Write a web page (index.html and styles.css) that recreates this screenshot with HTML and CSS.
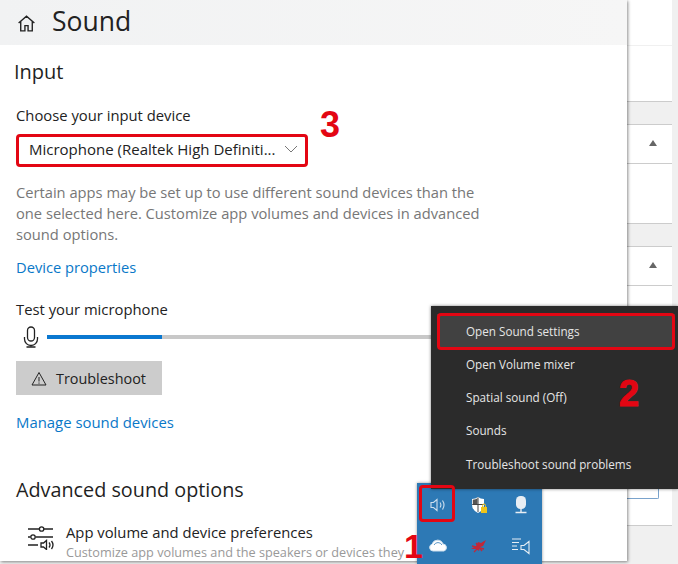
FILE: index.html
```html
<!DOCTYPE html>
<html lang="en">
<head>
<meta charset="utf-8">
<title>Sound</title>
<link rel="stylesheet" href="styles.css">
</head>
<body>
<div class="stage">
  <main class="settings">
    <header class="head">
      <svg class="home" width="21" height="21" viewBox="0 0 20 20"><path d="M2.500 9.500 10 3l7.500 6.500M4.500 8v9h4v-5h3v5h4V8" fill="none" stroke="#222" stroke-width="1.300"/></svg>
      <h1>Sound</h1>
    </header>
    <section class="body">
      <h2>Input</h2>
      <div class="label">Choose your input device</div>
      <div class="select"><span>Microphone (Realtek High Definiti...</span><svg width="14" height="8" viewBox="0 0 14 8"><path d="M1 1l6 6 6-6" fill="none" stroke="#777" stroke-width="1"/></svg></div>
      <p class="desc">Certain apps may be set up to use different sound devices than the one selected here. Customize app volumes and devices in advanced sound options.</p>
      <a class="link props">Device properties</a>
      <div class="label test">Test your microphone</div>
      <div class="meter">
        <svg width="16" height="22" viewBox="0 0 16 22"><rect x="4.500" y="1" width="7" height="14" rx="3.500" fill="none" stroke="#222" stroke-width="1.300"/><path d="M1.500 11v2a6.500 6.500 0 0 0 13 0v-2M8 19.500v1.500M3.500 21h9" fill="none" stroke="#222" stroke-width="1.300"/></svg>
        <div class="track"><div class="fill"></div></div>
      </div>
      <div class="btn"><svg width="16" height="15" viewBox="0 0 16 15"><path d="M8 1.500 15 14H1zM8 6v4.500M8 11.500v1.200" fill="none" stroke="#222" stroke-width="1"/></svg><span>Troubleshoot</span></div>
      <a class="link manage">Manage sound devices</a>
      <h2 class="adv">Advanced sound options</h2>
      <div class="pref">
        <svg class="pref-icon" width="28" height="26" viewBox="0 0 28 26"><path d="M1 5h11.500M17 5h9M1 13h2.500M8.500 13h17.500M1 21h10" fill="none" stroke="#222" stroke-width="1.500"/><circle cx="14.600" cy="5" r="2.200" fill="none" stroke="#222" stroke-width="1.300"/><circle cx="6" cy="13" r="2.200" fill="none" stroke="#222" stroke-width="1.300"/><path d="M14 19h2.500l3-2.500v9l-3-2.500H14zM22 18.500q2 2.500 0 5M24.500 17q3 4 0 8" fill="none" stroke="#222" stroke-width="1.300"/></svg>
        <div class="pref-text">
          <div class="pref-title">App volume and device preferences</div>
          <div class="pref-sub">Customize app volumes and the speakers or devices they</div>
        </div>
      </div>
    </section>
  </main>
  <aside class="side">
    <div class="card c1"></div>
    <div class="card c2"><i class="arrow"></i></div>
    <div class="card c3"><i class="arrow"></i><div class="field"></div></div>
  </aside>

  <nav class="menu">
    <div class="item on">Open Sound settings</div>
    <div class="item">Open Volume mixer</div>
    <div class="item">Spatial sound (Off)</div>
    <div class="item">Sounds</div>
    <div class="item">Troubleshoot sound problems</div>
  </nav>

  <div class="tray">
    <svg class="t" width="20" height="20" viewBox="0 0 20 20"><path d="M3 7.500h2.500l3.500-3v11l-3.500-3H3zM12 7.500q1.800 2.500 0 5M14.500 5.500q3 4.500 0 9" fill="none" stroke="#cfe0ee" stroke-width="1.100"/></svg>
    <svg class="t" width="20" height="20" viewBox="0 0 20 20"><path d="M3 4q3.500 0 6-2 2.500 2 6 2v6q0 5-6 8-6-3-6-8z" fill="#fff"/><path d="M9 2.500V17M3.200 9.500h11.600" stroke="#444" stroke-width="1"/><path d="M3.800 4.800Q7 4.500 8.500 3.300V9H3.800z" fill="#555"/><path d="M12 12h6v6h-6z" fill="#f0c419"/><path d="M13.500 12v-1.500a1.500 1.500 0 0 1 3 0V12" fill="none" stroke="#f0c419"/></svg>
    <svg class="t" width="20" height="20" viewBox="0 0 20 20"><rect x="5" y="1" width="10" height="13" rx="4.500" fill="#e8eef4"/><path d="M10 14v3M4.500 17.500h11" stroke="#e8eef4" stroke-width="1.400"/></svg>
    <svg class="t" width="20" height="20" viewBox="0 0 20 20"><path d="M5 15a3.500 3.500 0 0 1-1-6.800 5.800 5.800 0 0 1 11-.2 3.600 3.600 0 0 1 1 7z" fill="#fff" stroke="#cfe0ee" stroke-width="1"/><path d="M6 9a4.500 4.500 0 0 1 8 0" fill="none" stroke="#5c97c6" stroke-width="1"/></svg>
    <svg class="t" width="20" height="20" viewBox="0 0 20 20"><path d="M2 13l5-3 2-4 3 1 5-3-3 6-3 1-1 4-3-2z" fill="#c0283a"/><path d="M5 16l10-10M7 7l6 8M3 10l12 3" stroke="#c0283a" stroke-width="1.300"/></svg>
    <svg class="t" width="20" height="20" viewBox="0 0 20 20"><path d="M1 3h9M1 6.500h7M1 10h5M1 13.500h6M10 9.500h3l5-4v12l-5-4h-3z" fill="none" stroke="#e6eef5" stroke-width="1.100"/></svg>
  </div>

  <div class="mark m-select"></div>
  <div class="mark m-item"></div>
  <div class="mark m-tray"></div>
  <span class="num n1">1</span>
  <span class="num n2">2</span>
  <span class="num n3">3</span>
</div>
</body>
</html>
```
FILE: styles.css
```css
* { box-sizing: border-box; }
html, body { margin: 0; padding: 0; }
body { font-family: "Open Sans", "Noto Sans", sans-serif; background: #f0f0f0; }
.stage { position: relative; width: 678px; height: 564px; overflow: hidden; display: flex; background: #f0f0f0; }

.settings { width: 627px; height: 561px; background: #fff; flex: none; box-shadow: 1px 1px 3px rgba(0,0,0,.45); z-index: 1; overflow: hidden; }
.head { height: 45px; background: linear-gradient(90deg, #f1f2f3, #f6f6f6); display: flex; align-items: center; padding: 0 0 3px 16px; gap: 15px; }
.home { flex: none; margin-top: 5px; }
h1 { margin: 0; font-size: 26.500px; font-weight: 400; color: #222; line-height: 34px; }
.body { padding: 0 16px; }
h2 { margin: 0; font-weight: 400; font-size: 20px; color: #1f1f1f; }
.body > h2:first-child { margin: 14px 0 0 -2px; line-height: 26px; }
.label { font-size: 14.800px; color: #222; line-height: 20px; }
.body > .label:nth-child(2) { margin-top: 20px; }
.select { width: 288px; height: 32px; margin-top: 8px; margin-left: 2px; padding: 0 8px 0 11px; display: flex; align-items: center; justify-content: space-between; font-size: 15px; color: #222; }
.desc { margin: 17px 0 0; width: 475px; font-size: 14.700px; line-height: 21px; color: #777; }
.link { display: block; color: #0a78c8; font-size: 14.700px; line-height: 20px; }
.props { margin-top: 12px; }
.test { margin-top: 22px; }
.meter { display: flex; align-items: center; gap: 8px; height: 24px; margin-top: 6px; padding-left: 7px; }
.track { flex: 1; height: 4px; background: #c8c8c8; margin-right: -20px; }
.fill { width: 115px; height: 4px; background: #0a78d0; }
.btn { width: 146px; height: 34px; margin-top: 12px; padding-left: 15px; background: #cccccc; display: flex; align-items: center; gap: 9px; font-size: 14.400px; color: #222; }
.manage { margin-top: 17px; font-size: 14.900px; }
h2.adv { margin-top: 44px; line-height: 28px; font-size: 19.800px; }
.pref { display: flex; gap: 11px; margin-top: 18px; padding-left: 11px; }
.pref-icon { flex: none; margin-top: 2px; }
.pref-title { font-size: 14.800px; line-height: 20px; color: #222; }
.pref-sub { font-size: 12.700px; line-height: 20px; color: #999; }

.side { flex: 1; display: flex; flex-direction: column; gap: 22px; padding-right: 6px; }
.card { background: #fff; border-bottom: 1px solid #ccc; position: relative; }
.c1 { height: 102px; }
.c1::after { content: ""; position: absolute; left: 0; right: 0; top: 45px; border-top: 1px solid #f0f0f0; }
.c2, .c3 { border-top: 1px solid #ccc; }
.c2 { height: 100px; }
.c3 { height: 280px; }
.c2::after, .c3::after { content: ""; position: absolute; left: 0; right: 0; top: 38px; border-top: 1px solid #ccc; }
.arrow { display: block; width: 0; height: 0; margin: 15px 0 0 22px; border: 4px solid transparent; border-top-width: 0; border-bottom: 6px solid #666; }
.field { position: absolute; left: -40px; right: 13px; top: 220px; height: 32px; border: 1px solid #7aa3cc; border-top: 0; border-radius: 0 0 2px 0; }

.menu { position: absolute; left: 431px; top: 306px; width: 247px; height: 183px; background: #2b2b2b; box-shadow: 0 0 3px rgba(0,0,0,.5); padding-top: 8px; z-index: 3; }
.item { height: 33.250px; padding-left: 35px; display: flex; align-items: center; font-size: 11.700px; color: #e6e6e6; }
.item.on { background: #414141; margin: 0 3px 0 6px; padding-left: 29px; }

.tray { position: absolute; left: 417px; top: 483px; width: 125px; height: 81px; background: #2d79b5; display: grid; grid-template-columns: repeat(3, 1fr); grid-auto-rows: 41px; padding: 1px 0 0; justify-items: center; align-items: center; z-index: 2; box-shadow: 0 0 3px rgba(0,0,0,.4); }

.mark { position: absolute; border: 3px solid #e30613; border-radius: 4px; z-index: 4; }
.m-select { left: 16px; top: 134px; width: 292px; height: 33px; }
.m-item { left: 437px; top: 313px; width: 238px; height: 37px; }
.m-tray { left: 419px; top: 485px; width: 36px; height: 37px; }
.num { position: absolute; color: #e30613; font-family: "Liberation Sans", sans-serif; font-weight: 700; font-size: 36px; line-height: 36px; z-index: 4; }
.n1 { left: 404px; top: 528px; font-size: 34px; }
.n2 { left: 619px; top: 376px; -webkit-text-stroke: 1px #e30613; }
.n3 { left: 320px; top: 107px; }
```
